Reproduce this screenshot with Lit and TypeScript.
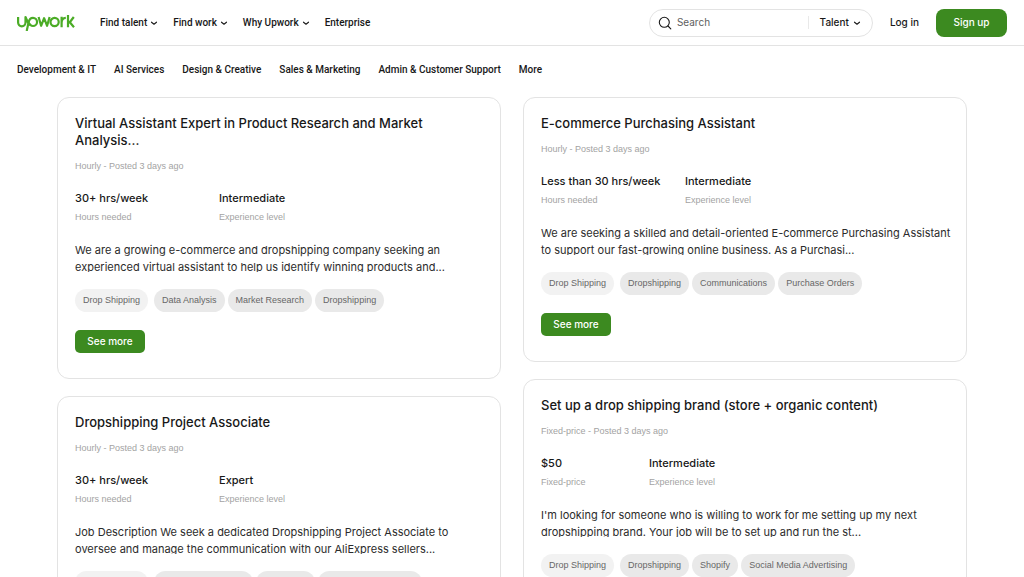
import { LitElement, html, css, svg } from "lit";
import { customElement, property } from "lit/decorators.js";

interface Job {
  title: string;
  fixed?: boolean;
  amount: string;
  level: string;
  text: string[];
  tags: string[];
}

const columns: Job[][] = [
  [
    {
      title: "Virtual Assistant Expert in Product Research and Market Analysis...",
      amount: "30+ hrs/week",
      level: "Intermediate",
      text: ["We are a growing e-commerce and dropshipping company seeking an", "experienced virtual assistant to help us identify winning products and..."],
      tags: ["Drop Shipping", "Data Analysis", "Market Research", "Dropshipping"],
    },
    {
      title: "Dropshipping Project Associate",
      amount: "30+ hrs/week",
      level: "Expert",
      text: ["Job Description We seek a dedicated Dropshipping Project Associate to", "oversee and manage the communication with our AliExpress sellers..."],
      tags: ["Drop Shipping", "Project Management", "AliExpress", "Supplier Management"],
    },
  ],
  [
    {
      title: "E-commerce Purchasing Assistant",
      amount: "Less than 30 hrs/week",
      level: "Intermediate",
      text: ["We are seeking a skilled and detail-oriented E-commerce Purchasing Assistant", "to support our fast-growing online business. As a Purchasi..."],
      tags: ["Drop Shipping", "Dropshipping", "Communications", "Purchase Orders"],
    },
    {
      title: "Set up a drop shipping brand (store + organic content)",
      fixed: true,
      amount: "$50",
      level: "Intermediate",
      text: ["I'm looking for someone who is willing to work for me setting up my next", "dropshipping brand. Your job will be to set up and run the st..."],
      tags: ["Drop Shipping", "Dropshipping", "Shopify", "Social Media Advertising"],
    },
  ],
];

const chevron = svg`<svg class="chevron" viewBox="0 0 8 8" width="8" height="8" aria-hidden="true"><path d="M1.5 3.2 L4 5.2 L6.5 3.2" fill="none" stroke="currentColor" stroke-width="1.1" stroke-linecap="round" stroke-linejoin="round"/></svg>`;

@customElement("job-card")
class JobCard extends LitElement {
  @property({ attribute: false }) job!: Job;

  static styles = css`
    :host { display: block; }
    .card {
      border: 1px solid #e3e3e3;
      border-radius: 12px;
      padding: 17px 17px 25px;
      color: #181818;
    }
    h2, p, dl, dd, dt, ul { margin: 0; padding: 0; }
    h2 { font-size: 13px; line-height: 17px; font-weight: 500; }
    .muted { font-family: "Liberation Sans", sans-serif; font-size: 9px; line-height: 17px; color: #a3a3a3; }
    .meta { margin-top: 9px; }
    .facts { display: flex; margin-top: 15px; }
    .fact { display: flex; flex-direction: column-reverse; gap: 2px; }
    .fact:first-child { width: 144px; }
    .fixed .fact:first-child { width: 108px; }
    dd { font-size: 11px; line-height: 17px; font-weight: 500; white-space: nowrap; }
    .text {
      margin-top: 16px;
      height: 30px;
      overflow-x: visible;
      overflow-y: clip;
      font-size: 11px;
      line-height: 17px;
      color: #2b2b2b;
      white-space: nowrap;
    }
    .tags { display: flex; gap: 3px; margin-top: 17px; list-style: none; }
    .tag {
      height: 23px;
      padding: 0 8px;
      border-radius: 12px;
      background: #e9e9e9;
      font-family: "Liberation Sans", sans-serif;
      font-size: 9px;
      line-height: 22px;
      color: #676767;
      white-space: nowrap;
    }
    .tag:first-child { margin-right: 3px; background: #f2f2f2; }
    .more {
      display: block;
      box-sizing: border-box;
      width: 70px;
      height: 23px;
      margin-top: 18px;
      padding: 0;
      border: 0;
      border-radius: 5px;
      background: #3c8a20;
      color: #fff;
      font: 500 10px/23px Inter, sans-serif;
      text-align: center;
      text-decoration: none;
    }
  `;

  render() {
    const j = this.job;
    const kind = j.fixed ? "Fixed-price" : "Hourly";
    return html`<article class="card ${j.fixed ? "fixed" : ""}">
      <h2>${j.title}</h2>
      <p class="muted meta">${kind} - Posted 3 days ago</p>
      <dl class="facts">
        <div class="fact"><dt class="muted">${j.fixed ? "Fixed-price" : "Hours needed"}</dt><dd>${j.amount}</dd></div>
        <div class="fact"><dt class="muted">Experience level</dt><dd>${j.level}</dd></div>
      </dl>
      <p class="text">${j.text[0]}<br />${j.text[1]}</p>
      <ul class="tags">${j.tags.map((t) => html`<li class="tag">${t}</li>`)}</ul>
      <a class="more" href="#">See more</a>
    </article>`;
  }
}

@customElement("app-root")
class AppRoot extends LitElement {
  static styles = css`
    :host {
      display: block;
      background: #fff;
      color: #181818;
      font-family: Inter, "Liberation Sans", sans-serif;
    }
    a { color: inherit; text-decoration: none; }
    .top {
      display: flex;
      align-items: center;
      height: 45px;
      padding: 0 17px;
      border-bottom: 1px solid #e3e3e3;
    }
    .logo { display: block; margin-right: 25px; }
    .logo svg { display: block; }
    .menu, .cats { display: flex; font: 500 10px/17px Roboto, sans-serif; white-space: nowrap; }
    .menu { gap: 15px; }
    .menu button, .scope {
      display: flex;
      align-items: center;
      gap: 3px;
      padding: 0;
      border: 0;
      background: none;
      color: inherit;
      font: 500 10px/17px Roboto, sans-serif;
    }
    .search {
      display: flex;
      align-items: center;
      box-sizing: border-box;
      width: 224px;
      height: 28px;
      margin-left: auto;
      padding: 0 11px 0 8px;
      border: 1px solid #e3e3e3;
      border-radius: 14px;
    }
    .search input {
      flex: 1;
      min-width: 0;
      margin-left: 5px;
      padding: 0;
      border: 0;
      outline: 0;
      background: none;
      font: 400 10px/17px Inter, sans-serif;
    }
    .search input::placeholder { color: #5e5e5e; opacity: 1; }
    .scope { height: 13px; gap: 4px; padding-left: 11px; border-left: 1px solid #e9e9e9; font-family: Inter, sans-serif; }
    .login { margin: 0 17px; font-size: 10px; line-height: 17px; font-weight: 500; }
    .signup {
      width: 71px;
      height: 28px;
      padding: 0;
      border: 0;
      border-radius: 8px;
      background: #3c8a20;
      color: #fff;
      font: 500 10px/17px Inter, sans-serif;
    }
    .cats { gap: 18px; padding: 15px 17px 19px; }
    .board {
      display: grid;
      grid-template-columns: 1fr 1fr;
      gap: 22px;
      padding: 0 57px 17px;
    }
    .column { display: flex; flex-direction: column; gap: 17px; min-width: 0; }
  `;

  render() {
    return html`
      <header class="top">
        <a class="logo" href="#" aria-label="Upwork">
          <svg viewBox="0 0 58 17" width="58" height="17" fill="none" stroke="#4bac26" stroke-width="2.2" stroke-linejoin="round">
            <path d="M1.1 3 V8.6 A3.7 3.7 0 0 0 8.5 8.6 V3 C9.8 6.4 11.6 9.8 13.8 11.4"/>
            <path d="M9.7 17 L11.6 8.2 C12.3 5.2 13.8 3.9 16 3.9 A4 4 0 0 1 16 12 C14 12 12.2 10.4 10.8 7.8"/>
            <path d="M21.6 3 L24.1 11.8 L27.1 4.2 L30.1 11.8 L32.6 3"/>
            <circle cx="37.6" cy="8" r="4.1"/>
            <path d="M44.6 13.2 V2.8 M44.6 8.8 C44.6 5.4 46.2 3.9 48.8 3.9"/>
            <path d="M51 1 V13.2 M51.5 8.5 H52.6 L56.8 3 M52.8 8.3 L57 13.2"/>
          </svg>
        </a>
        <nav class="menu">
          <button>Find talent ${chevron}</button>
          <button>Find work ${chevron}</button>
          <button>Why Upwork ${chevron}</button>
          <a href="#">Enterprise</a>
        </nav>
        <form class="search">
          <svg viewBox="0 0 14 14" width="14" height="14" fill="none" stroke="#181818" stroke-width="1.1" stroke-linecap="round"><circle cx="6.3" cy="6.3" r="5"/><path d="M10 10 L12.8 12.8"/></svg>
          <input type="search" placeholder="Search" aria-label="Search" />
          <button class="scope" type="button">Talent ${chevron}</button>
        </form>
        <a class="login" href="#">Log in</a>
        <button class="signup">Sign up</button>
      </header>
      <nav class="cats">
        ${["Development & IT", "AI Services", "Design & Creative", "Sales & Marketing", "Admin & Customer Support", "More"].map((c) => html`<a href="#">${c}</a>`)}
      </nav>
      <main class="board">
        ${columns.map((col) => html`<div class="column">${col.map((j) => html`<job-card .job=${j}></job-card>`)}</div>`)}
      </main>
    `;
  }
}
